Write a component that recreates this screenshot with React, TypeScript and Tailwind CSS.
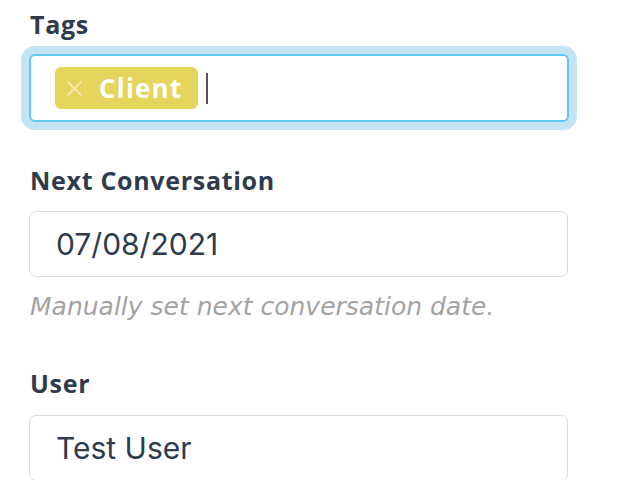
function Label({ text, className = '' }: { text: string; className?: string }) {
  return (
    <div className={`font-['Open_Sans',sans-serif] font-bold text-[25px] leading-[28px] tracking-[0.7px] text-[#2d3b4d] ${className}`}>
      {text}
    </div>
  );
}

function TextBox({ value, className = '' }: { value: string; className?: string }) {
  return (
    <div
      className={`w-[539px] h-[66px] flex items-center pl-[26px] border border-[#dadada] rounded-[7px] bg-white font-['Inter',sans-serif] text-[30px] text-[#2d3b4d] ${className}`}
    >
      {value}
    </div>
  );
}

export default function App() {
  return (
    <div className="w-[640px] h-[480px] bg-white overflow-hidden pl-[29px] pt-[10px]">
      <Label text="Tags" className="pl-px" />

      {/* tag input, focused */}
      <div className="mt-[16px] w-[540px] h-[68px] flex items-center gap-[8px] pl-[24px] border-2 border-[#63c7ee] rounded-[6px] ring-8 ring-[#c3e4f2] bg-white">
        <span className="h-[42px] flex items-center gap-[17px] pl-[12px] pr-[16px] rounded-[6px] bg-[#e5d55c] text-white font-['Open_Sans',sans-serif] font-bold text-[26px]">
          <svg width="15" height="15" viewBox="0 0 15 15" className="shrink-0">
            <path d="M1 1L14 14M14 1L1 14" stroke="#f5eebb" strokeWidth="1.6" strokeLinecap="round" />
          </svg>
          <span className="tracking-[1.2px]">Client</span>
        </span>
        <span className="w-[2px] h-[31px] bg-[#555]" />
      </div>

      <Label text="Next Conversation" className="mt-[44px] pl-px" />
      <TextBox value="07/08/2021" className="mt-[17px]" />
      <div className="mt-[14px] pl-px font-['DejaVu_Sans',sans-serif] italic text-[25px] leading-[32px] text-[#a3a3a3]">
        Manually set next conversation date.
      </div>

      <Label text="User" className="mt-[46px] pl-px" />
      <TextBox value="Test User" className="mt-[18px]" />
    </div>
  );
}
